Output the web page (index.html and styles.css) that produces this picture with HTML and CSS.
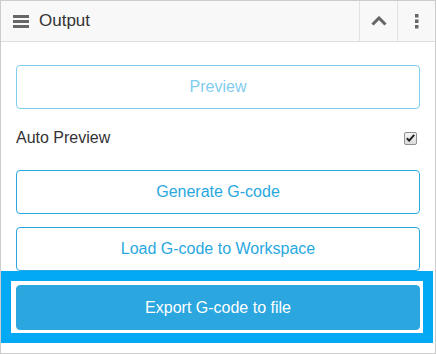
FILE: index.html
```html
<!DOCTYPE html>
<html>
<head>
    <title>Output</title>
    <meta name="viewport" content="width=device-width, initial-scale=1">
    <link rel="stylesheet" href="styles.css">
</head>
<body>
    <div class="panel">
        <div class="panel-head">
            <span class="drag-icon">
                <svg width="16" height="13" viewBox="0 0 16 13"><rect x="0" y="0" width="16" height="3" fill="#666"/><rect x="0" y="5" width="16" height="3" fill="#666"/><rect x="0" y="10" width="16" height="3" fill="#666"/></svg>
            </span>
            <span class="panel-title">Output</span>
            <span class="head-btn">
                <svg width="16" height="10" viewBox="0 0 16 10"><path d="M1.5 8.5 L8 2 L14.5 8.5" fill="none" stroke="#666" stroke-width="3"/></svg>
            </span>
            <span class="head-btn">
                <svg width="4" height="15" viewBox="0 0 4 15"><rect x="0" y="0" width="3.5" height="3.5" fill="#666"/><rect x="0" y="5.5" width="3.5" height="3.5" fill="#666"/><rect x="0" y="11" width="3.5" height="3.5" fill="#666"/></svg>
            </span>
        </div>
        <div class="panel-body">
            <button class="btn btn-disabled">Preview</button>
            <div class="option-row">
                <label>Auto Preview</label>
                <span class="check">
                    <svg width="9" height="8" viewBox="0 0 9 8"><path d="M0.8 4.2 L3.2 6.6 L8.2 0.8" fill="none" stroke="#222" stroke-width="2"/></svg>
                </span>
            </div>
            <button class="btn">Generate G-code</button>
            <button class="btn btn-gap">Load G-code to Workspace</button>
            <div class="highlight">
                <button class="btn btn-primary">Export G-code to file</button>
            </div>
        </div>
    </div>
</body>
</html>
```

FILE: styles.css
```css
html, body {
    margin: 0;
    padding: 0;
    background: #fff;
}
body {
    font-family: "Liberation Sans", Arial, sans-serif;
    color: #333;
}
.panel {
    width: 434px;
    height: 352px;
    border: 1px solid #ccc;
    display: flex;
    flex-direction: column;
}
.panel-head {
    display: flex;
    align-items: stretch;
    height: 40px;
    background: #f8f8f8;
    border-bottom: 1px solid #ddd;
}
.drag-icon {
    display: flex;
    align-items: center;
    padding-left: 12px;
    padding-right: 10px;
}
.panel-title {
    flex: 1;
    display: flex;
    align-items: center;
    font-size: 17px;
    color: #333;
}
.head-btn {
    width: 37px;
    border-left: 1px solid #e2e2e2;
    display: flex;
    align-items: center;
    justify-content: center;
}
.panel-body {
    flex: 1;
    display: flex;
    flex-direction: column;
    padding: 23px 15px 0 15px;
}
.btn {
    display: block;
    width: 100%;
    height: 44px;
    margin: 0;
    padding: 0;
    border: 1px solid #29a8e0;
    border-radius: 4px;
    background: #fff;
    color: #29a8e0;
    font-family: "Liberation Sans", Arial, sans-serif;
    font-size: 16px;
}
.btn-disabled {
    border-color: #7fcdee;
    color: #7fcdee;
}
.btn-gap {
    margin-top: 13px;
}
.btn-primary {
    height: 45px;
    background: #2ba6df;
    border-color: #2ba6df;
    color: #fff;
}
.option-row {
    display: flex;
    align-items: center;
    justify-content: space-between;
    height: 20px;
    margin: 19px 0 22px 0;
    font-size: 16px;
}
.check {
    width: 11px;
    height: 11px;
    margin-right: 3px;
    border: 1px solid #8f8f8f;
    border-radius: 2px;
    background: linear-gradient(#f4f4f4, #dcdcdc);
    display: flex;
    align-items: center;
    justify-content: center;
}
.highlight {
    margin: 0 -13px 0 -15px;
    padding: 4px 3px 3px 5px;
    border: 10px solid #03a9f4;
    background: #fff;
}
```
